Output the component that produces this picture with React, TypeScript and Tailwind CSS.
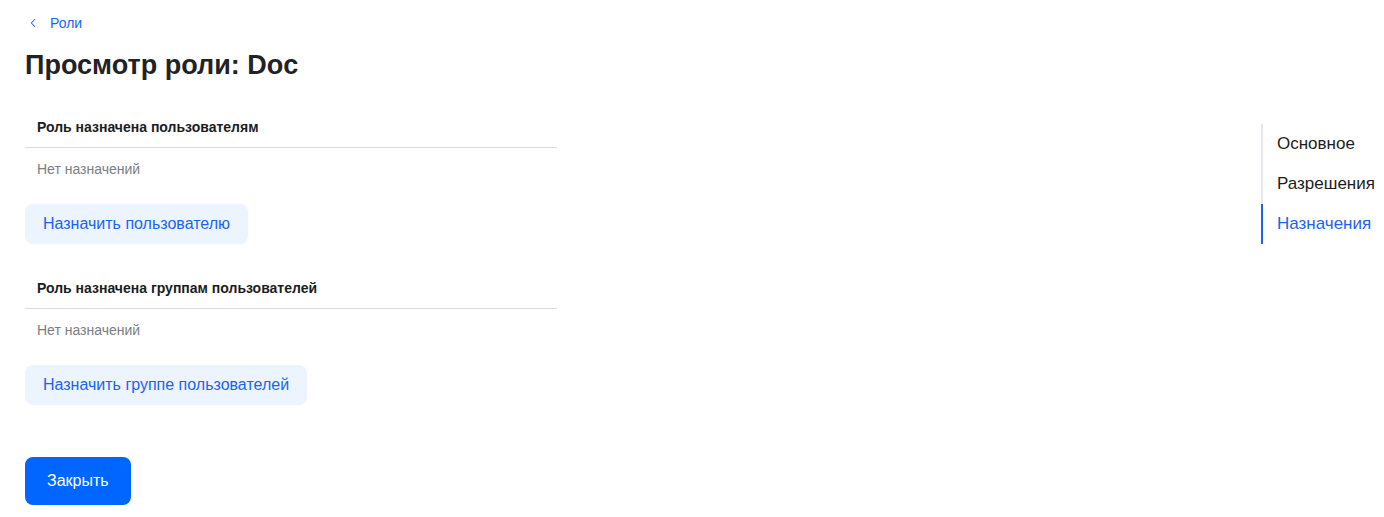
import { ChevronLeft } from "lucide-react";

const NAV = [
  { label: "Основное", active: false },
  { label: "Разрешения", active: false },
  { label: "Назначения", active: true },
];

function Section({ title, action }: { title: string; action: string }) {
  return (
    <div>
      <div className="h-[40px] flex items-center px-[12px] border-b border-[#d9d9de] text-[14px] font-bold text-[#1b1d21]">
        {title}
      </div>
      <div className="h-[40px] flex items-center pt-[2px] px-[12px] text-[14px] text-[#7b7d85]">Нет назначений</div>
      <button className="mt-[16px] h-[40px] px-[18px] rounded-lg bg-[#ebf4ff] text-[16px] text-[#1d63f0]">
        {action}
      </button>
    </div>
  );
}

export default function App() {
  return (
    <div className="min-h-[517px] bg-white pl-[25px] pr-[10px] pt-[14px] font-['Liberation_Sans',Arial,sans-serif]">
      <a className="flex items-center h-[18px] text-[14px] text-[#1d63f0] cursor-pointer">
        <ChevronLeft className="w-[14px] h-[14px] ml-[1px] mr-[10px]" strokeWidth={1.8} />
        <span>Роли</span>
      </a>
      <h1 className="mt-[17px] text-[27px] leading-[32px] font-bold text-[#1f2226]">Просмотр роли: Doc</h1>
      <div className="mt-[27px] flex justify-between">
        <div className="w-[532px]">
          <Section title="Роль назначена пользователям" action="Назначить пользователю" />
          <div className="mt-[25px]">
            <Section title="Роль назначена группам пользователей" action="Назначить группе пользователей" />
          </div>
          <button className="mt-[52px] h-[48px] px-[22px] rounded-lg bg-[#0066ff] text-[16px] text-white">
            Закрыть
          </button>
        </div>
        <nav className="mt-[16px] w-[113px] self-start border-l-2 border-[#e5e5ea]">
          {NAV.map((item) => (
            <div
              key={item.label}
              className={
                item.active
                  ? "-ml-[2px] h-[40px] flex items-center pl-[14px] border-l-2 border-[#1d63f0] text-[17px] text-[#1d63f0]"
                  : "h-[40px] flex items-center pl-[14px] text-[17px] text-[#1b1d21]"
              }
            >
              {item.label}
            </div>
          ))}
        </nav>
      </div>
    </div>
  );
}
